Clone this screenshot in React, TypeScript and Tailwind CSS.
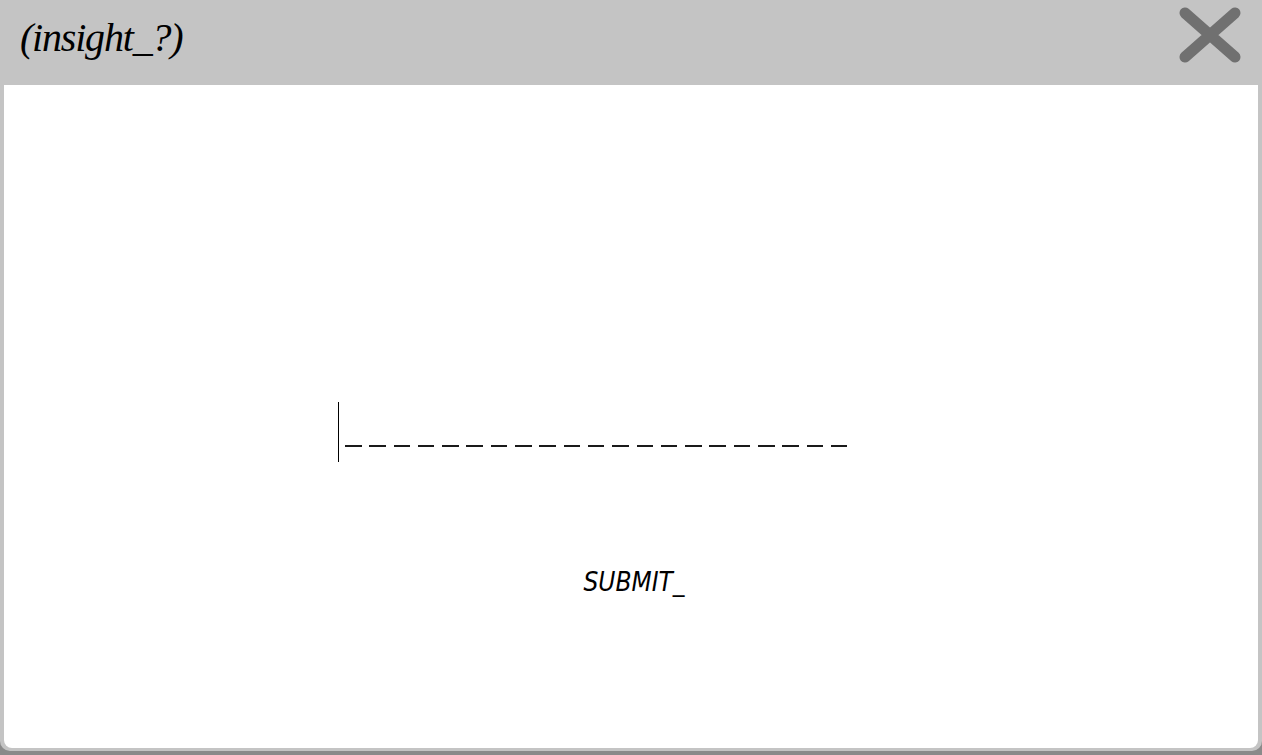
const DASHES = Array.from({ length: 21 }, (_, i) => i);

export default function App() {
  return (
    <div className="h-[755px] w-full overflow-hidden bg-[#8a8a8a]">
      <div className="flex h-[751px] flex-col rounded-b-[10px] bg-[#c4c4c4] px-1 pb-[3px]">
        <header className="flex h-[85px] shrink-0 items-start justify-between pl-4 pr-4">
          <h1
            className="pt-[18px] text-[40px] italic leading-none tracking-[-1.2px] text-black"
            style={{ fontFamily: '"Liberation Serif", "Times New Roman", serif' }}
          >
            (insight_?)
          </h1>
          <button className="mt-[7px]" aria-label="close">
            <svg width="64" height="56" viewBox="0 0 64 56">
              <path
                d="M7 6 L57 50 M57 6 L7 50"
                stroke="#707070"
                strokeWidth="11"
                strokeLinecap="round"
                fill="none"
              />
            </svg>
          </button>
        </header>

        <main className="flex flex-1 flex-col rounded-b-[8px] bg-white">
          {/* answer field */}
          <div className="ml-[334px] mt-[317px] flex h-[60px] items-end">
            <div className="h-full w-px bg-black" />
            <div className="mb-[15px] ml-[6px] flex gap-[7.8px]">
              {DASHES.map((d) => (
                <div key={d} className="h-[2px] w-[16.5px] bg-[#1a1a1a]" />
              ))}
            </div>
          </div>

          <div className="mt-[107px] flex justify-center pl-[6px]">
            <button
              className="text-[26px] font-extralight italic leading-none text-black font-stretch-condensed"
              style={{ fontFamily: '"DejaVu Sans Condensed", "DejaVu Sans", sans-serif' }}
            >
              SUBMIT_
            </button>
          </div>
        </main>
      </div>
    </div>
  );
}
